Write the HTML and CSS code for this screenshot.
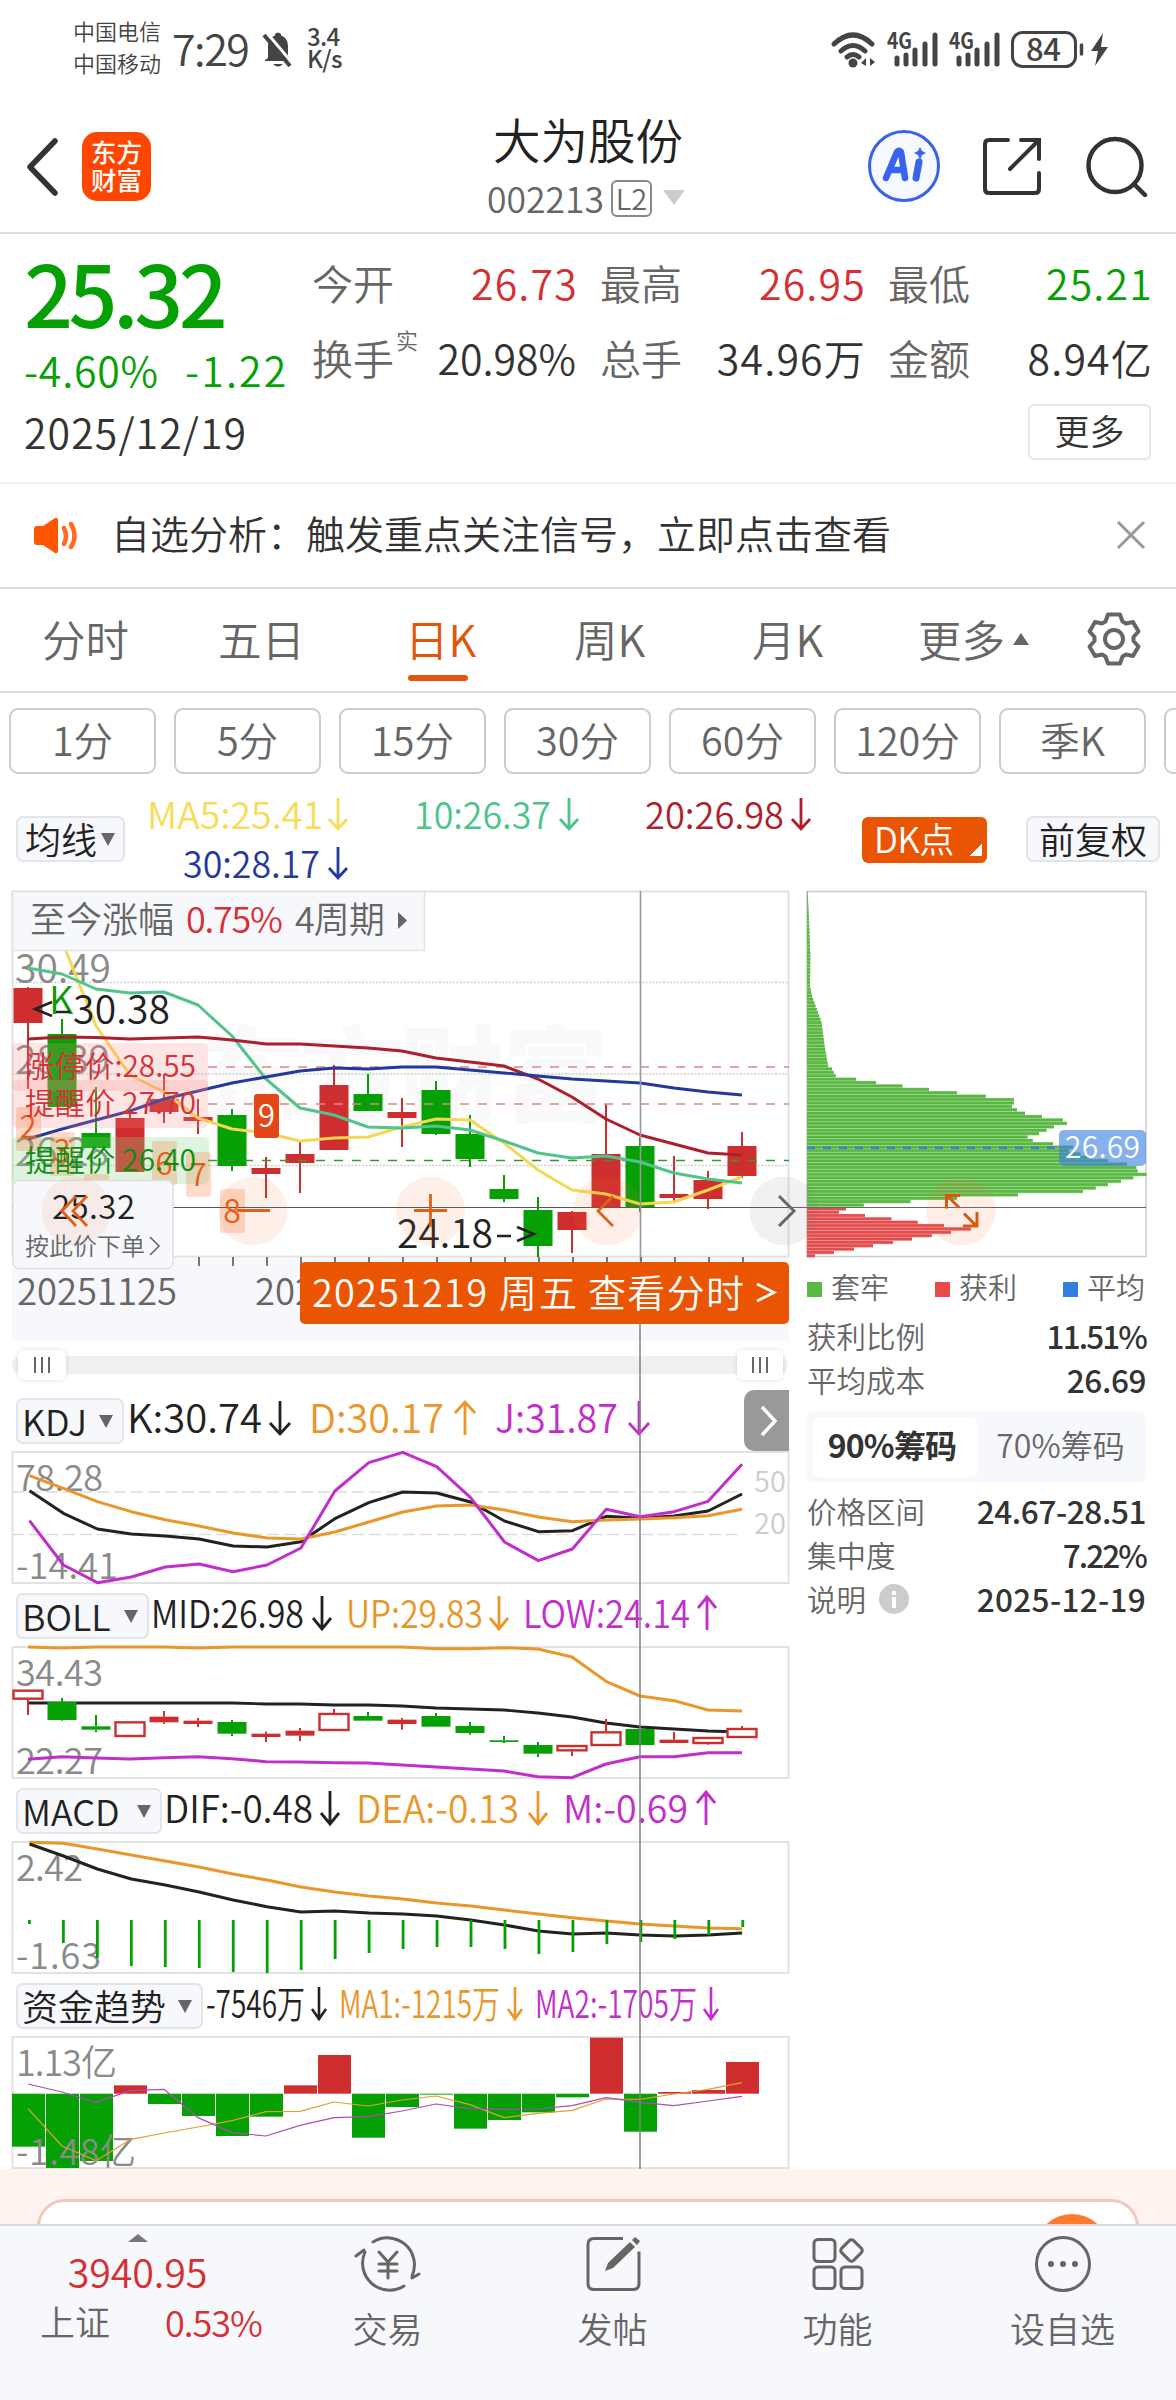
FILE: index.html
```
<!DOCTYPE html>
<html lang="zh-CN">
<head>
<meta charset="utf-8">
<title>大为股份 002213</title>
<link rel="stylesheet" href="styles.css">
</head>
<body>
<div class="phone">
  <div class="status">
    <div class="carriers"><span>中国电信</span><span>中国移动</span></div>
    <span class="clock">7:29</span>
    <svg class="bell" width="34" height="38" viewBox="0 0 34 38"><path d="M7 27V15q0-8 7-10.500V3q3-3 6 0v1.500q7 2.500 7 10.500v10l3 4v1H4v-1z" fill="#444"/><path d="M12 33h10q-5 5-10 0z" fill="#444"/><path d="M6 2l26 31" stroke="#fff" stroke-width="3"/><path d="M3 4l26 31" stroke="#444" stroke-width="4"/></svg>
    <div class="net"><span>3.4</span><span>K/s</span></div>
    <svg class="signals" width="290" height="40" viewBox="825 30 290 40">
      <g fill="none" stroke="#444" stroke-width="5" stroke-linecap="round"><path d="M834 44q19-18 38 0M841 51q12-11 24 0M847 57q6-5 12 0"/></g>
      <circle cx="853" cy="63" r="4.500" fill="#444"/><path d="M866 58v8l-5-3zM870 66v-8l5 4z" fill="#444"/>
      <g fill="none" stroke="#444" stroke-width="5" stroke-linecap="round"><path d="M897 58v6M906 55v9M915 50v14M925 44v20M935 35v29M959 58v6M968 55v9M977 50v14M987 44v20M997 35v29"/></g>
      <text x="887" y="49" font-size="22" font-weight="700" fill="#444" textLength="25" lengthAdjust="spacingAndGlyphs">4G</text>
      <text x="949" y="49" font-size="22" font-weight="700" fill="#444" textLength="25" lengthAdjust="spacingAndGlyphs">4G</text>
      <rect x="1012.500" y="32.500" width="63" height="34" rx="10" fill="none" stroke="#444" stroke-width="3"/>
      <text x="1026" y="61" font-size="31" font-weight="500" fill="#444" textLength="35">84</text>
      <path d="M1081.500 45v9" stroke="#444" stroke-width="3.500" stroke-linecap="round"/>
      <path d="M1103 33l-12 18h7l-3 15 13-19h-7z" fill="#444"/>
    </svg>
  </div>

  <header class="top">
    <svg class="back" width="36" height="60" viewBox="0 0 36 60"><path d="M31 5L6 31l25 26" fill="none" stroke="#333" stroke-width="5.500" stroke-linecap="round" stroke-linejoin="round"/></svg>
    <div class="logo"><span>东方</span><span>财富</span></div>
    <div class="name">
      <h1>大为股份</h1>
      <div class="code"><span>002213</span><b>L2</b><svg width="24" height="18" viewBox="0 0 24 18"><path d="M1 1h22L12 16z" fill="#ccc"/></svg></div>
    </div>
    <div class="tools">
      <svg width="76" height="76" viewBox="866 127 76 76"><circle cx="904" cy="166" r="34.500" fill="#f6f9ff" stroke="#3a62e6" stroke-width="3"/><path d="M886 178l11-26q2-2 4 0l4 26M890 170h14" fill="none" stroke="#3763f0" stroke-width="6.500" stroke-linecap="round" stroke-linejoin="round"/><path d="M919 162l-3 16" stroke="#3763f0" stroke-width="7" stroke-linecap="round"/><path d="M920 147l2 4 4 2-4 2-2 5-2-5-4-2 4-2z" fill="#3763f0"/></svg>
      <svg width="64" height="64" viewBox="982 133 64 64"><path d="M1009 140h-19q-4 0-4 4v45q0 4 4 4h46q4 0 4-4v-16M1022 140h18v19M1040 140l-29 29" fill="none" stroke="#333" stroke-width="4" stroke-linecap="round"/></svg>
      <svg width="64" height="64" viewBox="1084 131 64 64"><circle cx="1115" cy="163.500" r="26.500" fill="none" stroke="#333" stroke-width="4.500"/><path d="M1134 182l11 11" stroke="#333" stroke-width="4.500" stroke-linecap="round"/></svg>
    </div>
  </header>

  <section class="quote">
    <div class="price">
      <div class="last">25.32</div>
      <div class="change"><span>-4.60%</span><span>-1.22</span></div>
      <div class="date">2025/12/19</div>
    </div>
    <div class="stats">
      <dl><dt>今开</dt><dd class="up">26.73</dd></dl>
      <dl><dt>最高</dt><dd class="up">26.95</dd></dl>
      <dl><dt>最低</dt><dd class="down">25.21</dd></dl>
      <dl><dt>换手<sup>实</sup></dt><dd class="pct">20.98%</dd></dl>
      <dl><dt>总手</dt><dd>34.96万</dd></dl>
      <dl><dt>金额</dt><dd>8.94亿</dd></dl>
      <button class="more">更多</button>
    </div>
  </section>

  <section class="notice">
    <svg width="48" height="40" viewBox="32 515 48 40"><path d="M34 529q0-3 3-3h6l12-8q3-1 3 3v29q0 4-3 3l-12-8h-6q-3 0-3-3z" fill="#ff5500"/><path d="M64 528q4 8 0 16M71 524q7 12 0 23" fill="none" stroke="#ff6a20" stroke-width="4.500" stroke-linecap="round"/></svg>
    <p>自选分析：触发重点关注信号，立即点击查看</p>
    <svg width="32" height="32" viewBox="0 0 32 32"><path d="M3 3l26 26M29 3L3 29" stroke="#999" stroke-width="3"/></svg>
  </section>

  <nav class="tabs">
    <span>分时</span><span>五日</span><span class="on">日K</span><span>周K</span><span>月K</span><span>更多<svg width="16" height="12" viewBox="0 0 16 12"><path d="M0 12L8 0l8 12z" fill="#666"/></svg></span>
    <svg width="56" height="56" viewBox="-28 -28 56 56"><path d="M-6-24.500H6L8.500-17.500 12-15.500 19-17 24.500-7.500 19.500-2V2L24.500 7.500 19 17 12 15.500 8.500 17.500 6 24.500H-6L-8.500 17.500-12 15.500-19 17-24.500 7.500-19.500 2V-2L-24.500-7.500-19-17-12-15.500-8.500-17.500z" fill="none" stroke="#666" stroke-width="4" stroke-linejoin="round"/><circle r="9" fill="none" stroke="#666" stroke-width="4"/></svg>
  </nav>

  <div class="periods"><span>1分</span><span>5分</span><span>15分</span><span>30分</span><span>60分</span><span>120分</span><span>季K</span><span></span></div>

  <div class="averages">
    <div class="pill">均线<i></i></div>
    <svg width="690" height="90" viewBox="140 792 690 90" font-size="37">
      <g fill="#f7dc5a"><text x="147" y="829" textLength="176" lengthAdjust="spacingAndGlyphs">MA5:25.41</text></g>
      <g fill="#4cc48a"><text x="414" y="829" textLength="137" lengthAdjust="spacingAndGlyphs">10:26.37</text></g>
      <g fill="#ad1f2d"><text x="645" y="829" textLength="139" lengthAdjust="spacingAndGlyphs">20:26.98</text></g>
      <g fill="#24399c"><text x="183" y="878" textLength="137" lengthAdjust="spacingAndGlyphs">30:28.17</text></g>
      <g fill="none" stroke-width="2.800"><path stroke="#f7dc5a" d="M338 798v31M329 819l9 10 9-10"/><path stroke="#4cc48a" d="M569 798v31M560 819l9 10 9-10"/><path stroke="#ad1f2d" d="M801 798v31M792 819l9 10 9-10"/><path stroke="#24399c" d="M338 847v31M329 868l9 10 9-10"/></g>
    </svg>
    <div class="dk">DK点</div>
    <div class="pill fq">前复权</div>
  </div>

  <main class="charts">
    <div class="left">
      <svg class="block" width="790" height="460" viewBox="0 885 790 460">
        <rect x="12" y="1257" width="777" height="84" fill="#f7f8fb"/>
        <rect x="12.500" y="891.500" width="776" height="365" fill="#fff" stroke="#e2e2e4" stroke-width="2"/>
        <g font-size="104" font-weight="900" fill="#f9f9fa"><text x="200" y="1114">东</text><text x="300" y="1114">方</text><text x="400" y="1114">财</text><text x="504" y="1114">富</text></g>
        <path d="M12 982.500H789M12 1074H789M12 1165.500H789" stroke="#d0d0d0" stroke-width="1.300" stroke-dasharray="2 1.500"/>
        <g fill="#8a8a8a" font-size="39"><text x="15" y="983" textLength="96">30.49</text><text x="15" y="1074" textLength="95">28.39</text><text x="15" y="1166" textLength="94">26.28</text></g>
        <g id="candles"></g>
        <g stroke-width="1.600" stroke-dasharray="9 9"><path d="M208 1067H789M208 1104H789" stroke="#dc8587"/><path d="M208 1160.500H789" stroke="#399339"/></g>
        <g id="ma"></g>
        <g fill="#fa8a8a" fill-opacity=".22"><rect x="12" y="1043" width="196" height="48" rx="5"/><rect x="12" y="1080" width="196" height="48" rx="5"/></g>
        <rect x="12" y="1137" width="197" height="47" rx="5" fill="#8ad88a" fill-opacity=".27"/>
        <g fill="#f96b2d" fill-opacity=".25"><rect x="16" y="1107" width="25" height="44" rx="3"/><rect x="50" y="1132" width="25" height="44" rx="3"/><rect x="84" y="1174" width="25" height="30" rx="3"/><rect x="152" y="1141" width="25" height="44" rx="3"/><rect x="186" y="1152" width="25" height="45" rx="3"/><rect x="220" y="1189" width="25" height="44" rx="3"/></g>
        <g fill="#e06018" font-size="31" text-anchor="middle"><text x="28" y="1138">2</text><text x="62" y="1162">3</text><text x="164" y="1175">6</text><text x="198" y="1186">7</text></g>
        <rect x="254" y="1094" width="25" height="44" rx="3" fill="#e24717"/><text x="266.500" y="1127" font-size="31" fill="#fff" text-anchor="middle">9</text>
        <g font-size="30"><g fill="#d83036"><text x="25" y="1077" textLength="171" lengthAdjust="spacingAndGlyphs">涨停价:28.55</text><text x="25" y="1114" textLength="171" lengthAdjust="spacingAndGlyphs">提醒价 27.70</text></g><text x="25" y="1171" fill="#0a9010" textLength="171" lengthAdjust="spacingAndGlyphs">提醒价 26.40</text></g>
        <text x="49" y="1014" font-size="38" fill="#0a9a0a">K</text>
        <g fill="#222" font-size="39"><text x="73" y="1024" textLength="97">30.38</text><text x="397" y="1248" textLength="96">24.18</text></g>
        <g fill="none" stroke="#222" stroke-width="2.500"><path d="M52 1002l-17 7 17 7M56 1012h14M497 1236h14M517 1227l17 7-17 7"/></g>
        <path d="M12 1207.500H790" stroke="#555" stroke-width="1.200"/>
        <path d="M640.500 891v370" stroke="#999" stroke-width="1.600"/>
        <g fill="#fa7338" fill-opacity=".11"><circle cx="253" cy="1211" r="34.500"/><circle cx="430.500" cy="1211" r="34.500"/><circle cx="607.500" cy="1211" r="34.500"/></g>
        <circle cx="784" cy="1211" r="34.500" fill="#777" fill-opacity=".1"/>
        <text x="232" y="1223" font-size="32" fill="#e06018" text-anchor="middle">8</text>
        <path d="M237 1210.500h33M414 1210.500h33M430.500 1194v33M613 1196l-15 15 15 15" fill="none" stroke="#e06018" stroke-width="2.800"/>
        <path d="M779 1196l15 15-15 15" fill="none" stroke="#666" stroke-width="3"/>
        <rect x="13" y="1180.500" width="160" height="88" rx="6" fill="#f7f8fb" stroke="#dfdfe2" stroke-width="1.500"/>
        <circle cx="76" cy="1211" r="34.500" fill="#fa7338" fill-opacity=".09"/>
        <text x="52" y="1219" font-size="33" fill="#222" textLength="83">25.32</text>
        <path d="M76 1196l-14 15 14 15M87 1196l-14 15 14 15" fill="none" stroke="#e06018" stroke-width="2.800"/>
        <text x="25" y="1255" font-size="24" fill="#666" textLength="120">按此价下单</text><path d="M150 1237l9 9-9 9" fill="none" stroke="#666" stroke-width="1.600"/>
        <rect x="12.500" y="891.500" width="412" height="59" fill="#f7f8fb" stroke="#e2e2e4" stroke-width="1.500"/>
        <g font-size="36" fill="#666"><text x="30" y="933" textLength="144">至今涨幅</text><text x="186" y="933" fill="#d52f33" textLength="97">0.75%</text><text x="295" y="933" textLength="90">4周期</text></g>
        <path d="M398 912l9 8.500-9 8.500z" fill="#666"/>
        <path d="M199 1257v9M233 1257v9M267 1257v9M301 1257v9M335 1257v9M369 1257v9M403 1257v9M437 1257v9M471 1257v9M505 1257v9M539 1257v9M573 1257v9M607 1257v9M641 1257v9M675 1257v9M709 1257v9M743 1257v9" stroke="#777" stroke-width="2"/>
        <g font-size="36.500" fill="#666"><text x="17" y="1305" textLength="160">20251125</text><text x="255" y="1305">202512</text></g>
        <rect x="300" y="1262" width="489" height="62" rx="5" fill="#ea5504"/>
        <g font-size="38" fill="#fff"><text x="312" y="1307" textLength="175">20251219</text><text x="499" y="1307" textLength="78">周五</text><text x="588" y="1307" textLength="156">查看分时</text><path d="M757 1284l17 8.500-17 8.500" fill="none" stroke="#fff" stroke-width="2.800"/></g>
      </svg>
      <div class="slider"><div class="track"></div><div class="knob"><i></i><i></i><i></i></div><div class="knob end"><i></i><i></i><i></i></div></div>

      <div class="head first"><div class="pill kdj">KDJ<i></i></div><div class="expand"><svg width="20" height="34" viewBox="0 0 20 34"><path d="M3 3l13 14L3 31" fill="none" stroke="#fff" stroke-width="3.500"/></svg></div>
        <svg class="values" width="620" height="46" viewBox="124 1398 620 46" font-size="39"><g fill="#222"><text x="127" y="1433" textLength="135" lengthAdjust="spacingAndGlyphs">K:30.74</text></g><g fill="#e9962a"><text x="309" y="1433" textLength="135" lengthAdjust="spacingAndGlyphs">D:30.17</text></g><g fill="#c22ecb"><text x="495" y="1433" textLength="123" lengthAdjust="spacingAndGlyphs">J:31.87</text></g><g fill="none" stroke-width="2.800"><path stroke="#222" d="M280 1401v33M270 1423l10 11 10-11"/><path stroke="#e9962a" d="M465 1435v-33M455 1413l10-11 10 11"/><path stroke="#c22ecb" d="M639 1401v33M629 1423l10 11 10-11"/></g></svg></div>
      <svg class="block" width="790" height="135" viewBox="0 1450 790 135">
        <rect x="12.500" y="1452" width="776" height="131" fill="#fff" stroke="#e2e2e4" stroke-width="2"/>
        <path d="M12 1492H740M12 1534.500H740" stroke="#ddd" stroke-width="1.600" stroke-dasharray="12 5"/>
        <g font-size="36" fill="#8a8a8a"><text x="16" y="1491" textLength="87">78.28</text><text x="16" y="1579" textLength="102">-14.41</text><g fill="#ccc" font-size="29"><text x="754" y="1492">50</text><text x="754" y="1534">20</text></g></g>
        <g id="kdj"></g>
      </svg>

      <div class="head"><div class="pill boll">BOLL<i></i></div>
        <svg class="values" width="620" height="46" viewBox="149 1593 620 46" font-size="38"><text x="151" y="1628" fill="#222" textLength="153" lengthAdjust="spacingAndGlyphs">MID:26.98</text><text x="346" y="1628" fill="#e9962a" textLength="137" lengthAdjust="spacingAndGlyphs">UP:29.83</text><text x="523" y="1628" fill="#c22ecb" textLength="167" lengthAdjust="spacingAndGlyphs">LOW:24.14</text><g fill="none" stroke-width="2.800"><path stroke="#222" d="M322 1596v33M313 1618l9 11 9-11"/><path stroke="#e9962a" d="M499 1596v33M490 1618l9 11 9-11"/><path stroke="#c22ecb" d="M707 1630v-33M698 1608l9-11 9 11"/></g></svg></div>
      <svg class="block" width="790" height="135" viewBox="0 1645 790 135">
        <rect x="12.500" y="1647" width="776" height="131" fill="#fff" stroke="#e2e2e4" stroke-width="2"/>
        <g font-size="36" fill="#8a8a8a"><text x="16" y="1686" textLength="87">34.43</text><text x="16" y="1774" textLength="87">22.27</text></g>
        <g id="boll"></g>
      </svg>

      <div class="head"><div class="pill macd">MACD<i></i></div>
        <svg class="values" width="620" height="46" viewBox="162 1788 620 46" font-size="38"><text x="164" y="1823" fill="#222" textLength="149" lengthAdjust="spacingAndGlyphs">DIF:-0.48</text><text x="356" y="1823" fill="#e9962a" textLength="163" lengthAdjust="spacingAndGlyphs">DEA:-0.13</text><text x="563" y="1823" fill="#c22ecb" textLength="125" lengthAdjust="spacingAndGlyphs">M:-0.69</text><g fill="none" stroke-width="2.800"><path stroke="#222" d="M330 1791v33M321 1813l9 11 9-11"/><path stroke="#e9962a" d="M538 1791v33M529 1813l9 11 9-11"/><path stroke="#c22ecb" d="M706 1825v-33M697 1803l9-11 9 11"/></g></svg></div>
      <svg class="block" width="790" height="135" viewBox="0 1840 790 135">
        <rect x="12.500" y="1842" width="776" height="131" fill="#fff" stroke="#e2e2e4" stroke-width="2"/>
        <g font-size="36" fill="#8a8a8a"><text x="16" y="1881" textLength="67">2.42</text><text x="16" y="1969" textLength="85">-1.63</text></g>
        <g id="macd"></g>
      </svg>

      <div class="head"><div class="pill fund">资金趋势<i></i></div>
        <svg class="values" width="560" height="46" viewBox="203 1983 560 46" font-size="38"><text x="206" y="2018" fill="#222" textLength="99" lengthAdjust="spacingAndGlyphs">-7546万</text><text x="339" y="2018" fill="#e9962a" textLength="161" lengthAdjust="spacingAndGlyphs">MA1:-1215万</text><text x="535" y="2018" fill="#c22ecb" textLength="162" lengthAdjust="spacingAndGlyphs">MA2:-1705万</text><g fill="none" stroke-width="2.600"><path stroke="#222" d="M319 1987v33M312 2009l7 10 7-10"/><path stroke="#e9962a" d="M515 1987v33M508 2009l7 10 7-10"/><path stroke="#c22ecb" d="M711 1987v33M704 2009l7 10 7-10"/></g></svg></div>
      <svg class="block" width="790" height="134" viewBox="0 2035 790 134">
        <rect x="12.500" y="2037" width="776" height="131" fill="#fff" stroke="#e2e2e4" stroke-width="2"/>
        <g id="fund"></g>
        <g font-size="36" fill="#8a8a8a"><text x="16" y="2076" textLength="101">1.13亿</text><text x="16" y="2165" textLength="120">-1.48亿</text></g>
        <g id="fundma"></g>
      </svg>
      <div class="crosshair"></div>
    </div>

    <aside class="chips">
      <svg class="block" width="386" height="380" viewBox="790 885 386 380">
        <rect x="807" y="891.500" width="339" height="365" fill="#fff" stroke="#ccc" stroke-width="1.500"/>
        <g id="dist"></g>
        <path d="M807 1147.700H1060" stroke="#3b86b8" stroke-width="3" stroke-dasharray="8 8"/>
        <path d="M790 1207.500H1146" stroke="#666" stroke-width="1.200"/>
        <circle cx="784" cy="1211" r="34.500" fill="#777" fill-opacity=".1"/><path d="M779 1196l15 15-15 15" fill="none" stroke="#666" stroke-width="3"/>
        <circle cx="961" cy="1211" r="34.500" fill="#fa7338" fill-opacity=".12"/>
        <path d="M960 1195.500h-13.500v13M947 1195.500l12 12M964 1213.500l13 13M963 1226h14v-14" fill="none" stroke="#d85a10" stroke-width="3"/>
        <rect x="1059" y="1130" width="87" height="36" rx="5" fill="#3a80de" fill-opacity=".62"/>
        <text x="1065" y="1158" font-size="30" fill="#fff" textLength="75">26.69</text>
      </svg>
      <div class="legend"><span class="g">套牢</span><span class="r">获利</span><span class="b">平均</span></div>
      <div class="row"><span>获利比例</span><b class="pct">11.51%</b></div>
      <div class="row"><span>平均成本</span><b>26.69</b></div>
      <div class="toggle"><b>90%筹码</b><span>70%筹码</span></div>
      <div class="row"><span>价格区间</span><b>24.67-28.51</b></div>
      <div class="row"><span>集中度</span><b class="pct">7.22%</b></div>
      <div class="row"><span>说明<i class="info"></i></span><b>2025-12-19</b></div>
    </aside>
  </main>

  <div class="promo"><div class="card"><div class="ball"></div></div></div>

  <nav class="bottom">
    <div class="index"><svg width="20" height="8" viewBox="0 0 20 8"><path d="M0 8L10 0l10 8z" fill="#777"/></svg><strong>3940.95</strong><div><span>上证</span><em>0.53%</em></div></div>
    <div class="item"><svg width="68" height="60" viewBox="-34 -30 68 60"><g fill="none" stroke="#666" stroke-width="3" stroke-linecap="round" stroke-linejoin="round"><path d="M-15-22A27 27 0 0 1 24 12M16 22A27 27 0 0 1-23-12M-32-8l8-6M24 14l7-4M-9-12L0-2l9-10M0-2v16M-9 0H9M-9 7H9"/></g></svg>交易</div>
    <div class="item"><svg width="60" height="60" viewBox="-30 -30 60 60"><g fill="none" stroke="#666" stroke-width="3"><path d="M10-25.500h-29q-6 0-6 6v39q0 6 6 6h39q6 0 6-6v-32"/></g><path d="M-8 7l3-8 22-21 5 5L0 4zM19-24l3-3 5 4-3 4z" fill="#666"/></svg>发帖</div>
    <div class="item"><svg width="60" height="60" viewBox="-30 -30 60 60"><g fill="none" stroke="#666" stroke-width="3"><rect x="-24" y="-24.500" width="21" height="22" rx="4"/><rect x="-24" y="3" width="21" height="21.500" rx="4"/><rect x="3" y="3" width="21" height="21.500" rx="4"/><rect x="5" y="-22" width="17" height="17" rx="3" transform="rotate(45 13.500 -13.500)"/></g></svg>功能</div>
    <div class="item"><svg width="60" height="60" viewBox="-30 -30 60 60"><circle r="26.500" fill="none" stroke="#666" stroke-width="3"/><g fill="#666"><circle cx="-12" r="3"/><circle r="3"/><circle cx="12" r="3"/></g></svg>设自选</div>
  </nav>
</div>
<script src="charts.js"></script>
</body>
</html>
```
FILE: styles.css
```
* { box-sizing: border-box; }
html, body { margin: 0; background: #fff; }
body { width: 1176px; height: 2400px; overflow: hidden; font-family: "Noto Sans CJK SC", "Noto Sans", sans-serif; font-weight: 350; color: #333; }
.phone { width: 1176px; height: 2400px; display: flex; flex-direction: column; overflow: hidden; }
.phone > * { flex: none; }
svg { display: block; flex: none; font-family: inherit; }
span, b { white-space: nowrap; }
i, em { font-style: normal; }

.status { height: 100px; display: flex; align-items: flex-start; padding: 14px 61px 0 73px; color: #444; }
.carriers { display: flex; flex-direction: column; width: 99px; font-size: 22px; line-height: 32px; }
.clock { font-size: 43px; line-height: 60px; width: 86px; margin-top: 3px; letter-spacing: -1.500px; }
.bell { margin: 17px 12px 0 3px; }
.net { display: flex; flex-direction: column; padding-top: 11px; font-size: 24px; font-weight: 500; line-height: 22px; letter-spacing: -.7px; }
.signals { margin: 16px 0 0 auto; }

.top { height: 134px; border-bottom: 2px solid #ddd; display: flex; position: relative; padding-left: 24px; }
.back { margin-top: 36px; }
.logo { width: 69px; height: 69px; margin: 32px 0 0 22px; border-radius: 15px; background: #ff4600; color: #fff; font-size: 25.500px; font-weight: 500; line-height: 28px; display: flex; flex-direction: column; align-items: center; padding-top: 5px; }
.name { position: absolute; left: 388px; width: 400px; top: 0; display: flex; flex-direction: column; align-items: center; }
h1 { margin: 9px 0 0; font-size: 47.500px; font-weight: 350; line-height: 60px; color: #222; }
.code { display: flex; align-items: center; font-size: 35.500px; line-height: 44px; color: #666; margin: 7px 0 0 -3px; }
.code b { margin: 0 10px 0 7px; width: 41px; height: 37px; border: 2px solid #888; border-radius: 6px; font-size: 29px; line-height: 30px; font-weight: 350; text-align: center; }
.tools { margin-left: auto; display: flex; align-items: center; gap: 39px; padding: 0 28px 2px 0; }

.quote { height: 250px; border-bottom: 2px solid #eee; display: flex; }
.price { width: 313px; padding: 12px 0 0 24px; color: #04a004; }
.last { font-size: 86px; font-weight: 500; line-height: 90px; letter-spacing: -4.500px; }
.change { display: flex; gap: 26px; font-size: 41px; line-height: 62px; letter-spacing: .8px; margin-top: 2px; }
.change span + span { letter-spacing: 2.200px; }
.date { color: #333; font-size: 41px; line-height: 62px; letter-spacing: 1.100px; }
.stats { width: 838px; display: grid; grid-template-columns: 263px 288px 287px; grid-auto-rows: 75px; padding-top: 8px; }
dl { margin: 0; display: flex; justify-content: space-between; font-size: 41px; line-height: 80px; }
dl:nth-child(3n+2), dl:nth-child(3n) { padding-left: 25px; }
dt { color: #666; position: relative; margin-left: -1px; }
dd { margin: 0 -2px 0 0; letter-spacing: 1.200px; }
dd.pct { letter-spacing: 0; margin-right: 0; }
dd.up { color: #d52f33; }
dd.down { color: #04a004; }
sup { position: absolute; left: 84px; top: 9px; font-size: 22px; line-height: 26px; }
.more { grid-column: 3; justify-self: end; width: 123px; height: 56px; margin-top: 12px; border: 2px solid #e6e6e6; border-radius: 6px; background: #fff; color: #333; font: 350 35px/46px "Noto Sans CJK SC", sans-serif; padding: 0 0 4px; }

.notice { height: 105px; border-bottom: 2px solid #ddd; display: flex; align-items: center; padding: 0 29px 2px 32px; }
.notice p { margin: 0 auto 6px 31px; font-size: 39px; line-height: 50px; }

.tabs { height: 104px; border-bottom: 2px solid #ddd; display: grid; grid-template-columns: 176px 187px 169px 178px 166px 168px 1fr; align-items: center; padding-left: 42px; color: #666; font-size: 43.500px; line-height: 60px; }
.tabs > span { height: 60px; margin-top: -3px; position: relative; display: flex; align-items: center; gap: 8px; }
.tabs > svg { margin: -2px 0 0 0; }
.tabs .on { color: #e2560c; }
.tabs .on::after { content: ""; position: absolute; left: 3px; top: 66px; width: 60px; height: 6px; border-radius: 3px; background: #e2560c; }

.periods { height: 97px; display: flex; gap: 18px; padding: 15px 0 0 9px; overflow: hidden; }
.periods span { flex: none; width: 147px; height: 66px; border: 2px solid #ccc; border-radius: 9px; color: #666; font-size: 39.500px; line-height: 57px; text-align: center; }

.averages { height: 95px; display: flex; align-items: flex-start; padding: 2px 16px 0; }
.pill { flex: none; height: 46px; border: 2px solid #e1e4e8; border-radius: 7px; background: #f7f8fb; color: #222; font-size: 36px; line-height: 36px; padding: 0 9px 3px 4px; display: flex; align-items: center; }
.pill i { width: 0; margin-top: 3px; border: 7px solid transparent; border-top: 13px solid #666; border-bottom: 0; }
.averages .pill { margin-top: 24px; width: 109px; padding: 0 0 2px 7px; gap: 4px; }
.averages svg { margin-left: 15px; }
.dk { width: 126px; height: 46px; margin: 25px 39px 0 32px; border-radius: 6px; background: linear-gradient(135deg, transparent 50%, #fff 50%) 108px 27px / 12px 12px no-repeat, #ea5504; color: #fff; font-size: 35px; line-height: 41px; padding-left: 12px; letter-spacing: -.5px; }
.averages .pill.fq { width: 134px; padding-left: 11px; }

.charts { height: 1284px; display: flex; }
.left { width: 790px; position: relative; }
.slider { height: 43px; position: relative; padding: 11px 0 0 12px; }
.track { width: 776px; height: 18px; border-radius: 9px; background: #f0f0f2; }
.knob { position: absolute; left: 18px; top: 5px; width: 48px; height: 30px; border-radius: 6px; background: #fff; box-shadow: 0 0 5px rgba(0,0,0,.14); display: flex; justify-content: center; align-items: center; gap: 5px; }
.knob.end { left: 737px; width: 46px; }
.knob i { width: 2px; height: 16px; background: #666; }
.head { height: 60px; padding: 8px 0 0 16px; display: flex; position: relative; }
.head.first { height: 62px; padding-top: 10px; }
.head .pill { justify-content: space-between; }
.head .kdj { width: 108px; }
.head .boll { width: 133px; }
.head .macd { width: 146px; }
.head .fund { width: 187px; }
.expand { position: absolute; right: 1px; top: 2px; width: 45px; height: 61px; border-radius: 10px 0 0 10px; background: #999; display: flex; align-items: center; justify-content: center; padding-left: 4px; }
.crosshair { position: absolute; left: 639px; top: 439px; width: 2px; height: 845px; background: rgba(130,130,130,.75); }

.chips { width: 386px; }
.legend { display: flex; justify-content: space-between; padding: 0 31px 0 17px; height: 50px; margin-bottom: 2px; font-size: 29px; line-height: 42px; color: #666; }
.legend span { display: flex; align-items: center; height: 42px; gap: 9px; }
.legend span::before { content: ""; width: 15px; height: 15px; background: #5ab943; margin-top: 6px; }
.legend .r::before { background: #e84949; }
.legend .b::before { background: #327fe0; }
.row { height: 44px; display: flex; justify-content: space-between; padding: 0 30px 0 17px; font-size: 29.500px; line-height: 36px; color: #666; }
.row b { color: #333; font-weight: 500; font-size: 31.500px; letter-spacing: -.4px; }
.row b.pct { letter-spacing: -1.900px; }
.row:last-child b { letter-spacing: .3px; }
.row span { display: flex; align-items: center; height: 36px; }
.info { width: 30px; height: 30px; margin: 2px 0 0 13px; border-radius: 50%; background: radial-gradient(circle at 15px 9px, #fff 2px, transparent 2.500px), linear-gradient(#fff, #fff) 13px 13px / 4px 11px no-repeat, #ccc; }
.toggle { width: 339px; height: 72px; margin: 6px 0 9px 17px; border-radius: 7px; background: #f7f8fb; display: flex; padding: 6px; font-size: 32px; line-height: 54px; color: #666; }
.toggle b { width: 164px; height: 60px; border-radius: 6px; background: #fff; color: #333; font-weight: 700; text-align: center; letter-spacing: -.8px; padding-right: 6px; }
.toggle span { flex: 1; text-align: center; padding-left: 4px; }

.promo { height: 55px; background: #fff3ef; overflow: hidden; padding: 30px 37px 0; }
.card { height: 120px; border: 3px solid #f2c8be; border-radius: 28px; background: #fff; position: relative; }
.ball { position: absolute; right: 27px; top: 12px; width: 74px; height: 74px; border-radius: 50%; background: #ff7a2c; }

.bottom { height: 176px; border-top: 2px solid #d6d9de; background: #f7f8fb; display: flex; color: #666; font-size: 35px; }
.index { width: 275px; display: flex; flex-direction: column; align-items: center; padding-top: 8px; }
.index strong { font-size: 39.500px; font-weight: 350; line-height: 54px; color: #d52f33; margin-top: 2px; letter-spacing: -.2px; }
.index div { width: 275px; display: flex; justify-content: space-between; padding: 0 13px 0 40px; line-height: 46px; }
.index em { color: #d52f33; font-size: 36px; letter-spacing: -1px; }
.item { width: 225px; display: flex; flex-direction: column; align-items: center; padding-top: 8px; line-height: 40px; gap: 14px; }
```
FILE: charts.js
```
const NS = 'http://www.w3.org/2000/svg';
const RED = '#cf2e2e', GREEN = '#04a004';
const STEP = 34, FIRST = 28;
const el = (id) => document.getElementById(id);

function add(parent, tag, attrs) {
  const node = document.createElementNS(NS, tag);
  for (const k in attrs) node.setAttribute(k, attrs[k]);
  parent.appendChild(node);
}
function line(parent, ys, color, width, first = FIRST, step = STEP, from = 0) {
  const pts = ys.map((y, i) => `${first + (i + from) * step},${y}`).join(' ');
  add(parent, 'polyline', { points: pts, fill: 'none', stroke: color, 'stroke-width': width, 'stroke-linejoin': 'round' });
}
const at = (top, values) => values.map((v) => top + v / 3);

// [direction, body top, body bottom, wick top, wick bottom]; direction 2 is a hollow rising candle
function candles(parent, rows) {
  rows.forEach(([dir, a, b, hi, lo], i) => {
    const x = FIRST + i * STEP, color = dir ? RED : GREEN;
    if (hi < a) add(parent, 'rect', { x: x - 1, y: hi, width: 2, height: a - hi, fill: color });
    if (lo > b) add(parent, 'rect', { x: x - 1, y: b, width: 2, height: lo - b, fill: color });
    if (dir === 2) add(parent, 'rect', { x: x - 14.5, y: a + 1, width: 29, height: Math.max(1, b - a - 2), fill: '#fff', stroke: color, 'stroke-width': 2.4 });
    else add(parent, 'rect', { x: x - 14.5, y: a, width: 29, height: b - a, fill: color });
  });
}

candles(el('candles'), [
  [1,988,1023,987,1089],[0,1034,1107,1019,1107],[0,1133,1148,1087,1148],[1,1118,1172,1113,1172],[1,1099,1112,1074,1123],
  [1,1117,1121,1099,1134],[0,1115,1166,1109,1171],[1,1168,1174,1157,1198],[1,1154,1163,1142,1193],[1,1085,1150,1065,1150],
  [0,1094,1111,1074,1111],[1,1112,1118,1098,1147],[0,1090,1134,1081,1135],[0,1134,1159,1115,1167],[0,1189,1199,1175,1202],
  [0,1210,1246,1197,1257],[1,1212,1230,1211,1253],[1,1154,1208,1104,1208],[0,1146,1208,1137,1212],[1,1194,1198,1156,1201],
  [1,1180,1199,1171,1209],[1,1146,1176,1132,1178]]);
const ma = el('ma');
const yellow = [951,1026,1075,1092,1118,1129,1133,1141,1138,1137,1127,1119,1120,1143,1170,1190,1194,1204,1202,1190,1177];
add(ma, 'polyline', { points: yellow.map((y, i) => `${i ? FIRST + (i + 1) * STEP : 66},${y}`).join(' '), fill: 'none', stroke: '#f5d751', 'stroke-width': 3, 'stroke-linejoin': 'round' });
line(ma, [968,974,989,993,992,1005,1036,1079,1108,1115,1127,1128,1126,1130,1141,1153,1158,1156,1162,1173,1179,1183], '#52c48b', 3);
line(ma, [1039,1037,1037.5,1039,1038,1037,1040,1044,1044,1046,1048,1051,1058,1062,1066,1079,1097,1119,1135,1144,1153,1155], '#ad1f2d', 3);
line(ma, [1139,1129,1120,1111,1099,1091,1083,1077,1071,1068,1069,1067,1067,1070,1073,1076,1079,1081,1083,1088,1092,1095], '#24399c', 3);

const kdj = el('kdj');
line(kdj, at(1330, [482,550,597,612,618,627,648,651,635,566,518,486,489,516,573,605,602,559,565,558,543,492]), '#222', 3, 29.5, 33.93);
line(kdj, at(1330, [437,475,515,545,569,588,609,624,627,606,576,546,528,525,540,561,575,570,567,563,557,538]), '#e9962a', 3, 29.5, 33.93);
line(kdj, at(1330, [572,705,758,741,711,702,725,705,654,483,398,367,410,503,636,692,657,538,560,545,514,403]), '#c22ecb', 3, 29.5, 33.93);

const boll = el('boll');
line(boll, at(1590, [339,339,339,339,339,339,339,342,342,345,345,348,354,357,360,369,381,399,411,417,423,426]), '#222', 2.8);
candles(boll, [
  [2,299,329,299,375],[0,336,390,324,392],[0,409,419,375,426],[2,394,441,394,441],[1,380,397,363,402],[1,392,402,384,411],
  [0,396,431,390,438],[1,431,441,425,456],[1,422,437,414,453],[2,369,423,357,423],[0,378,392,366,392],[1,389,402,384,419],
  [0,378,410,369,410],[0,408,429,396,434],[0,451,456,438,459],[0,465,491,456,501],[2,465,484,465,498],[2,424,468,387,468],
  [0,417,465,415,467],[1,449,459,426,459],[2,441,462,441,464],[2,414,444,408,444]
].map(([d, ...v]) => [d, ...at(1590, v)]));
line(boll, at(1590, [171,174,171,171,171,174,171,171,171,171,171,171,176,176,173,177,201,274,318,332,360,363]), '#e9962a', 3);
line(boll, at(1590, [508,500,504,507,503,500,506,515,516,518,519,525,531,537,543,560,563,522,500,500,488,488]), '#c22ecb', 3);

const macd = el('macd');
line(macd, at(1780, [187,190,207,225,243,261,282,300,321,336,348,357,369,378,390,402,413,423,432,438,444,446]), '#e9962a', 3, 29.5, 33.93);
line(macd, at(1780, [192,228,267,297,315,336,360,380,396,393,399,402,408,420,435,453,462,459,465,468,465,459]), '#222', 3, 29.5, 33.93);
at(1780, [432,489,534,558,561,564,576,579,570,537,519,507,501,501,507,522,516,492,486,477,465,441]).forEach((y, i) =>
  add(macd, 'rect', { x: 28 + i * 33.97, y: 1920, width: 2.8, height: y - 1920, fill: GREEN }));

const fundZero = 2093.7;
at(1970, [530,594,573,346,402,438,498,440,346,255,503,411,374,476,450,427,382,203,485,366,360,276]).forEach((y, i) =>
  add(el('fund'), 'rect', { x: 12 + i * STEP, y: Math.min(y, fundZero), width: 33, height: Math.abs(y - fundZero), fill: y < fundZero ? RED : GREEN }));
line(el('fundma'), at(1970, [416,528,572,509,489,471,452,425,424,396,408,390,378,404,443,430,421,387,388,372,358,338]), '#e0a030', 1.2);
line(el('fundma'), at(1970, [342,366,397,362,358,443,488,498,466,443,440,423,402,416,418,417,407,383,397,407,393,379]), '#b04ab8', 1.2);

// chip distribution: tail is interpolated between key points, the body is listed bar by bar
const tail = [[38,2],[120,6],[230,10],[320,9],[345,14],[380,26],[425,43],[500,53],[556,63]];
const dense = [75,80,86,147,207,286,366,450,536,621,621,615,630,654,705,767,780,741,718,696,662,677,738,798,785,820,845,902,960,988,992,1018,979,942,903,866,828,633,450,310,170];
const profit = [117,96,174,253,332,411,491,432,374,315,258,198,141,81,24];
function bar(v, w, dark, light) {
  const y = 880 + v / 3;
  add(el('dist'), 'rect', { x: 807, y: y - 1.7, width: w / 3, height: 3.5, fill: light });
  add(el('dist'), 'rect', { x: 807, y: y - 1.3, width: w / 3, height: 2.5, fill: dark });
}
for (let v = 38; v < 562; v += 10) {
  const k = Math.max(1, tail.findIndex(([t]) => t >= v));
  const [[a, p], [b, q]] = v > 556 ? tail.slice(-2) : [tail[k - 1], tail[k]];
  bar(v, p + (q - p) * (v - a) / (b - a), '#5cb646', '#8bd678');
}
dense.forEach((w, i) => bar(567 + i * 10.2, w, '#5cb646', '#8bd678'));
profit.forEach((w, i) => bar(986.500 + i * 10.05, w, '#e04f4f', '#ff8585'));
```
